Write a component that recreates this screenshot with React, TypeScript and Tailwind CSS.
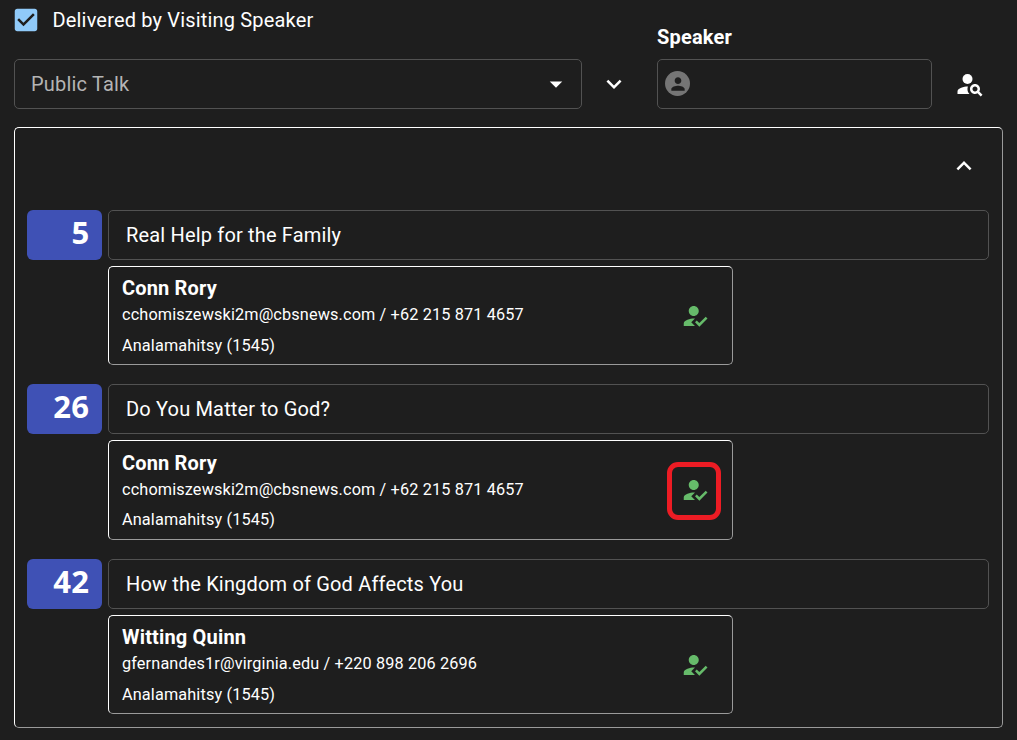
import type { ReactNode } from "react";

type Talk = {
  number: number;
  title: string;
  speaker: string;
  contact: string;
  congregation: string;
  highlighted?: boolean;
};

const talks: Talk[] = [
  {
    number: 5,
    title: "Real Help for the Family",
    speaker: "Conn Rory",
    contact: "cchomiszewski2m@cbsnews.com / +62 215 871 4657",
    congregation: "Analamahitsy (1545)",
  },
  {
    number: 26,
    title: "Do You Matter to God?",
    speaker: "Conn Rory",
    contact: "cchomiszewski2m@cbsnews.com / +62 215 871 4657",
    congregation: "Analamahitsy (1545)",
    highlighted: true,
  },
  {
    number: 42,
    title: "How the Kingdom of God Affects You",
    speaker: "Witting Quinn",
    contact: "gfernandes1r@virginia.edu / +220 898 206 2696",
    congregation: "Analamahitsy (1545)",
  },
];

function Icon({ className, children }: { className: string; children: ReactNode }) {
  return (
    <svg viewBox="0 0 24 24" fill="currentColor" className={`shrink-0 ${className}`} aria-hidden="true">
      {children}
    </svg>
  );
}

function AssignButton({ highlighted }: { highlighted?: boolean }) {
  return (
    <button className="relative mr-[22px] mt-[34px] flex size-[30px] items-center justify-center text-[#66bb6a]">
      <Icon className="size-[30px]">
        <path d="m9 17 3-2.94c-.39-.04-.68-.06-1-.06-2.67 0-8 1.34-8 4v2h9l-3-3zm2-5c2.21 0 4-1.79 4-4s-1.79-4-4-4-4 1.79-4 4 1.79 4 4 4m4.47 8.5L12 17l1.4-1.41 2.07 2.08 5.13-5.17 1.4 1.41z" />
      </Icon>
      {highlighted && (
        <span className="absolute -left-[13px] -top-[13px] h-[58px] w-[54px] rounded-[11px] border-5 border-[#ed1c24]" />
      )}
    </button>
  );
}

function TalkBlock({ talk }: { talk: Talk }) {
  return (
    <section className="flex h-[174.4px] items-start gap-[6px]">
      <div className="flex h-[50px] w-[75px] shrink-0 justify-end rounded-[6px] bg-[#3f51b5] pr-[12.6px] font-['Open_Sans',sans-serif] text-[31px] font-bold leading-[44px] tracking-[0.3px]">
        {talk.number}
      </div>
      <div className="flex flex-1 flex-col gap-[6px]">
        <h2 className="h-[50px] rounded-[5px] border border-[#525252] pl-[17px] text-[20px] leading-[48px] tracking-[0.17px]">
          {talk.title}
        </h2>
        <div className="flex h-[99.4px] w-[625px] justify-between rounded-[5px] border border-b-[#9a9a9a] border-l-white border-r-[#9a9a9a] border-t-white pl-[13px]">
          <div className="pt-[6.2px]">
            <p className="text-[20px] font-bold leading-[30px] tracking-[0.17px]">{talk.speaker}</p>
            <p className="mt-px text-[16.25px] leading-[22px] tracking-[0.14px]">{talk.contact}</p>
            <p className="mt-[8.8px] text-[16.25px] leading-[22px] tracking-[0.14px]">{talk.congregation}</p>
          </div>
          <AssignButton highlighted={talk.highlighted} />
        </div>
      </div>
    </section>
  );
}

export default function App() {
  return (
    <main className="h-[740px] w-[1017px] overflow-hidden bg-[#1e1e1e] pl-[14px] pr-[14px] font-[Roboto,sans-serif] text-white">
      <header className="flex h-[109px]">
        <div className="w-[568px]">
          <label className="-ml-[3px] flex h-[59px] items-start pt-[5px] text-[20px] leading-[30px] tracking-[0.17px]">
            <Icon className="size-[30px] text-[#90caf9]">
              <path d="M19 3H5c-1.11 0-2 .9-2 2v14c0 1.1.89 2 2 2h14c1.11 0 2-.9 2-2V5c0-1.1-.89-2-2-2m-9 14-5-5 1.41-1.41L10 14.17l7.59-7.59L19 8z" />
            </Icon>
            <span className="ml-[11.5px]">Delivered by Visiting Speaker</span>
          </label>
          <div className="flex h-[50px] items-center justify-between rounded-[5px] border border-[#525252] pl-[16px] pr-[10px] text-[20px] tracking-[0.1875px] text-[#b4b4b4]">
            <span>Public Talk</span>
            <Icon className="size-[30px] text-white">
              <path d="m7 10 5 5 5-5z" />
            </Icon>
          </div>
        </div>
        <button className="ml-[17px] mt-[69px] size-[30px]">
          <Icon className="size-[30px]">
            <path d="M16.59 8.59 12 13.17 7.41 8.59 6 10l6 6 6-6z" />
          </Icon>
        </button>
        <div className="ml-[28px] w-[275px]">
          <p className="h-[59px] pt-[22px] text-[20px] font-bold leading-[30px] tracking-[0.1875px]">Speaker</p>
          <div className="flex h-[50px] items-center rounded-[5px] border border-[#525252] pb-px pl-[7px]">
            <span className="flex size-[25px] items-center justify-center rounded-full bg-[#757575] text-[#1e1e1e]">
              <Icon className="size-[20px]">
                <path d="M12 12c2.21 0 4-1.79 4-4s-1.79-4-4-4-4 1.79-4 4 1.79 4 4 4m0 2c-2.67 0-8 1.34-8 4v2h16v-2c0-2.66-5.33-4-8-4" />
              </Icon>
            </span>
          </div>
        </div>
        <button className="ml-[23px] mt-[69px] size-[30px]">
          <Icon className="size-[30px]">
            <circle cx="10" cy="8" r="4" />
            <path d="M10.35 14.01C7.62 13.91 2 15.27 2 18v2h9.54c-2.47-2.76-1.23-5.89-1.19-5.99m9.08 4.01c.36-.59.57-1.28.57-2.02 0-2.21-1.79-4-4-4s-4 1.79-4 4 1.79 4 4 4c.74 0 1.43-.22 2.02-.57L20.59 22 22 20.59zM16 18c-1.1 0-2-.9-2-2s.9-2 2-2 2 .9 2 2-.9 2-2 2" />
          </Icon>
        </button>
      </header>
      <div className="mt-[18px] h-[601px] rounded-[5px] border border-b-[#9a9a9a] border-l-white border-r-[#9a9a9a] border-t-white pl-[12px] pr-[13px]">
        <div className="flex h-[82px] justify-end pr-[10px] pt-[23px]">
          <Icon className="size-[30px]">
            <path d="m12 8-6 6 1.41 1.41L12 10.83l4.59 4.58L18 14z" />
          </Icon>
        </div>
        {talks.map((talk) => (
          <TalkBlock key={talk.number} talk={talk} />
        ))}
      </div>
    </main>
  );
}
